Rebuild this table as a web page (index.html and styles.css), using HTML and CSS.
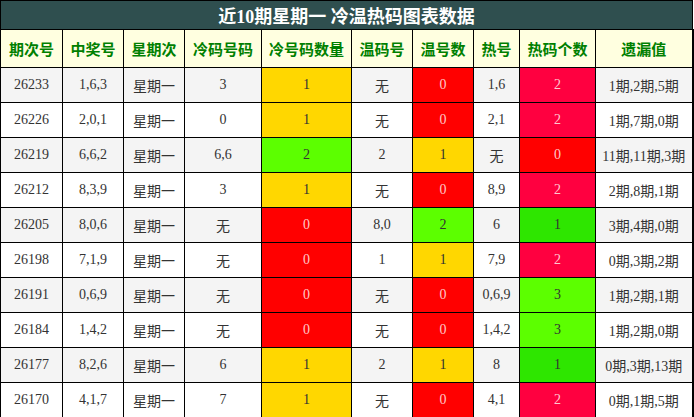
FILE: index.html
```html
<!DOCTYPE html>
<html lang="zh">
<head>
<meta charset="utf-8">
<link rel="stylesheet" href="styles.css">
</head>
<body>
<table class="chart">
  <colgroup>
    <col class="c1"><col class="c2"><col class="c3"><col class="c4"><col class="c5">
    <col class="c6"><col class="c7"><col class="c8"><col class="c9"><col class="c10">
  </colgroup>
  <thead>
    <tr class="title-row"><th colspan="10" class="title">近10期星期一 冷温热码图表数据</th></tr>
    <tr class="head-row">
      <th>期次号</th><th>中奖号</th><th>星期次</th><th>冷码号码</th><th>冷号码数量</th>
      <th>温码号</th><th>温号数</th><th>热号</th><th>热码个数</th><th>遗漏值</th>
    </tr>
  </thead>
  <tbody>
    <tr class="odd"><td>26233</td><td>1,6,3</td><td>星期一</td><td>3</td><td class="y">1</td><td>无</td><td class="r">0</td><td>1,6</td><td class="c">2</td><td>1期,2期,5期</td></tr>
    <tr><td>26226</td><td>2,0,1</td><td>星期一</td><td>0</td><td class="y">1</td><td>无</td><td class="r">0</td><td>2,1</td><td class="c">2</td><td>1期,7期,0期</td></tr>
    <tr class="odd"><td>26219</td><td>6,6,2</td><td>星期一</td><td>6,6</td><td class="g">2</td><td>2</td><td class="y">1</td><td>无</td><td class="r">0</td><td>11期,11期,3期</td></tr>
    <tr><td>26212</td><td>8,3,9</td><td>星期一</td><td>3</td><td class="y">1</td><td>无</td><td class="r">0</td><td>8,9</td><td class="c">2</td><td>2期,8期,1期</td></tr>
    <tr class="odd"><td>26205</td><td>8,0,6</td><td>星期一</td><td>无</td><td class="r">0</td><td>8,0</td><td class="g">2</td><td>6</td><td class="dg">1</td><td>3期,4期,0期</td></tr>
    <tr><td>26198</td><td>7,1,9</td><td>星期一</td><td>无</td><td class="r">0</td><td>1</td><td class="y">1</td><td>7,9</td><td class="c">2</td><td>0期,3期,2期</td></tr>
    <tr class="odd"><td>26191</td><td>0,6,9</td><td>星期一</td><td>无</td><td class="r">0</td><td>无</td><td class="r">0</td><td>0,6,9</td><td class="g">3</td><td>1期,2期,1期</td></tr>
    <tr><td>26184</td><td>1,4,2</td><td>星期一</td><td>无</td><td class="r">0</td><td>无</td><td class="r">0</td><td>1,4,2</td><td class="g">3</td><td>1期,2期,0期</td></tr>
    <tr class="odd"><td>26177</td><td>8,2,6</td><td>星期一</td><td>6</td><td class="y">1</td><td>2</td><td class="y">1</td><td>8</td><td class="dg">1</td><td>0期,3期,13期</td></tr>
    <tr><td>26170</td><td>4,1,7</td><td>星期一</td><td>7</td><td class="y">1</td><td>无</td><td class="r">0</td><td>4,1</td><td class="c">2</td><td>0期,1期,5期</td></tr>
  </tbody>
</table>
</body>
</html>
```
FILE: styles.css
```css
html, body {
  margin: 0;
  padding: 0;
  background: #fff;
}
.chart {
  width: 692px;
  border-collapse: collapse;
  table-layout: fixed;
  font-family: "Liberation Serif", "Noto Sans CJK SC", serif;
  font-size: 14px;
  color: #333;
}
.c1 { width: 62px; }
.c2 { width: 61px; }
.c3 { width: 61px; }
.c4 { width: 77px; }
.c5 { width: 90px; }
.c6 { width: 61px; }
.c7 { width: 61px; }
.c8 { width: 46px; }
.c9 { width: 76px; }
.c10 { width: 97px; }

.chart th, .chart td {
  border: 1px solid #000;
  text-align: center;
  padding: 0;
}
.title-row { height: 29px; }
.title {
  background: #2f4f4f;
  color: #fff;
  font-size: 18px;
  font-weight: bold;
  border: none;
  border-bottom: 2px solid #000;
}
.chart th.title { border-right: 1px solid #000; }
.head-row { height: 38px; }
.head-row th {
  background: #ffffe0;
  color: #008000;
  font-size: 15px;
  font-weight: bold;
  font-family: "Noto Sans CJK SC", sans-serif;
}
.chart tbody tr { height: 35px; background: #fff; }
.chart tbody tr.odd { background: #f4f4f4; }
.chart td:last-child, .head-row th:last-child { border-right: 2px solid #000; }
.chart tbody tr:last-child td { border-bottom: 2px solid #000; }

.y { background: #ffd700; color: #333; }
.r { background: #ff0000; color: #ffc8c8; }
.c { background: #ff0040; color: #ffc8d0; }
.g { background: #5cff00; color: #333; }
.dg { background: #2ee600; color: #333; }
```
